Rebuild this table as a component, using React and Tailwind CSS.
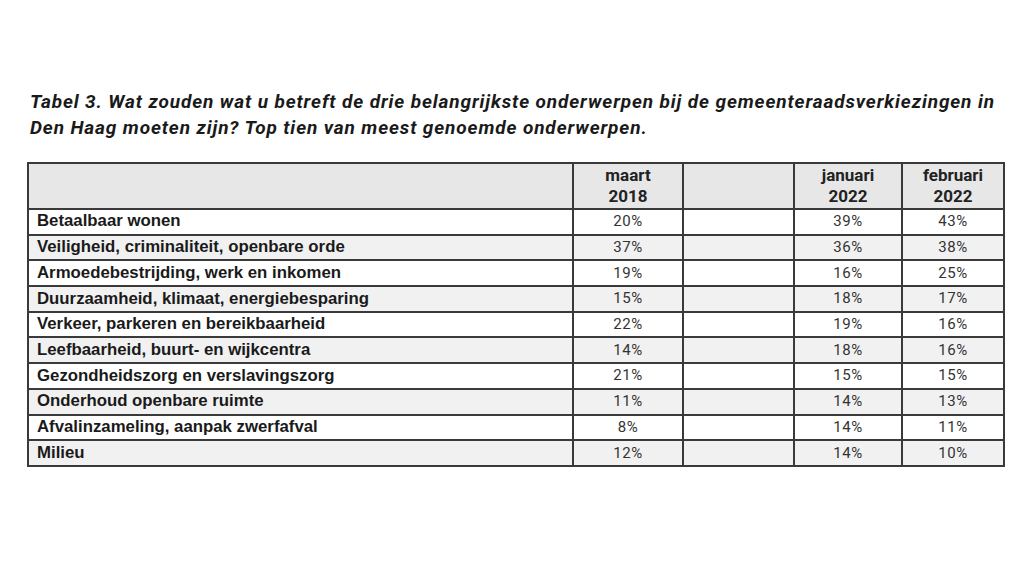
import React from "react";

const rows = [
  ["Betaalbaar wonen", "20%", "39%", "43%"],
  ["Veiligheid, criminaliteit, openbare orde", "37%", "36%", "38%"],
  ["Armoedebestrijding, werk en inkomen", "19%", "16%", "25%"],
  ["Duurzaamheid, klimaat, energiebesparing", "15%", "18%", "17%"],
  ["Verkeer, parkeren en bereikbaarheid", "22%", "19%", "16%"],
  ["Leefbaarheid, buurt- en wijkcentra", "14%", "18%", "16%"],
  ["Gezondheidszorg en verslavingszorg", "21%", "15%", "15%"],
  ["Onderhoud openbare ruimte", "11%", "14%", "13%"],
  ["Afvalinzameling, aanpak zwerfafval", "8%", "14%", "11%"],
  ["Milieu", "12%", "14%", "10%"],
];

const cell = "border-2 border-[#3a3a3a]";
const pct = `${cell} text-center font-['Roboto',sans-serif] text-[15px] tracking-[0.6px] text-[#333] leading-none`;

const App = () => {
  return (
    <div className="w-[1030px] h-[580px] bg-white overflow-hidden">
      <div className="pt-[89px] pl-[30px]">
        <h1 className="text-[19px] leading-[26px] font-bold italic tracking-[0.88px] text-[#1a1a1a] font-['Roboto',sans-serif] whitespace-nowrap">
          Tabel 3. Wat zouden wat u betreft de drie belangrijkste onderwerpen bij de gemeenteraadsverkiezingen in
          <br />
          Den Haag moeten zijn? Top tien van meest genoemde onderwerpen.
        </h1>
      </div>

      <table className="mt-[21px] ml-[27px] w-[976px] table-fixed border-collapse border-2 border-[#3a3a3a]">
        <colgroup>
          <col className="w-[545px]" />
          <col className="w-[110px]" />
          <col className="w-[111px]" />
          <col className="w-[108px]" />
          <col className="w-[102px]" />
        </colgroup>
        <thead>
          <tr className="h-[46px] bg-[#e7e7e8] font-['Roboto',sans-serif] font-bold text-[17px] leading-[21px] text-[#222]">
            <th className={cell}></th>
            <th className={cell}>
              maart
              <br />
              2018
            </th>
            <th className={cell}></th>
            <th className={cell}>
              januari
              <br />
              2022
            </th>
            <th className={cell}>
              februari
              <br />
              2022
            </th>
          </tr>
        </thead>
        <tbody>
          {rows.map((r, i) => (
            <tr
              key={r[0]}
              className={`h-[25.7px] ${i % 2 === 1 ? "bg-[#f1f1f2]" : "bg-white"}`}
            >
              <td className={`${cell} pl-[8px] text-left font-['Liberation_Sans',sans-serif] font-bold text-[16.8px] text-[#1a1a1a] leading-none`}>
                {r[0]}
              </td>
              <td className={pct}>{r[1]}</td>
              <td className={cell}></td>
              <td className={pct}>{r[2]}</td>
              <td className={pct}>{r[3]}</td>
            </tr>
          ))}
        </tbody>
      </table>
    </div>
  );
};

export default App;
